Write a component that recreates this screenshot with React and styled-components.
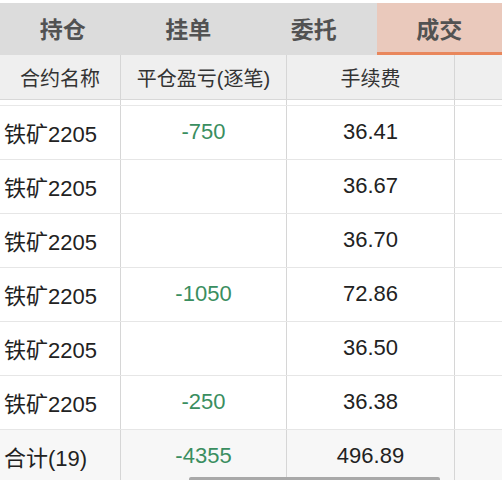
import React from "react"
import styled, { createGlobalStyle } from "styled-components"

const GlobalStyle = createGlobalStyle`
  html, body {
    margin: 0;
    padding: 0;
    background: #ffffff;
    font-family: "Liberation Sans", "Noto Sans CJK SC", sans-serif;
  }
`

const Page = styled.div`
  position: relative;
  width: 502px;
  height: 480px;
  overflow: hidden;
  padding-top: 3px;
  box-sizing: border-box;
  background: #ffffff;
`

const TabBar = styled.nav`
  display: flex;
  height: 49px;
  background: #dcdcdc;
  border-bottom: 3px solid #dcdcdc;
`

const Tab = styled.div`
  flex: 1;
  display: flex;
  align-items: center;
  justify-content: center;
  font-size: 23px;
  font-weight: bold;
  color: #525252;
  background: ${(p) => (p.active ? "#eac9bc" : "transparent")};
  margin-bottom: -3px;
  border-bottom: 3px solid ${(p) => (p.active ? "#e9875c" : "transparent")};
`

const Row = styled.div`
  display: grid;
  grid-template-columns: 121px 166px 168px 1fr;
  height: ${(p) => p.height || 54}px;
  box-sizing: border-box;
  background: ${(p) => p.bg || "#ffffff"};
  border-bottom: 1px solid ${(p) => p.line || "#e6e6e6"};
`

const Cell = styled.div`
  display: flex;
  align-items: center;
  justify-content: ${(p) => (p.left ? "flex-start" : "center")};
  padding-left: ${(p) => (p.left ? "4px" : "0")};
  padding-bottom: ${(p) => (p.size ? 0 : 1)}px;
  border-right: 1px solid #d6d6d6;
  font-size: ${(p) => p.size || 22}px;
  color: ${(p) => (p.green ? "#3a8e60" : p.muted ? "#333333" : "#222222")};
  white-space: nowrap;
  &:last-child {
    border-right: none;
  }
`

const ScrollThumb = styled.div`
  position: absolute;
  left: 189px;
  bottom: 0;
  width: 251px;
  height: 3px;
  background: #a9a9a9;
  border-radius: 2px 2px 0 0;
`

const tabs = ["持仓", "挂单", "委托", "成交"]

const trades = [
  { name: "铁矿2205", pnl: "-750", fee: "36.41" },
  { name: "铁矿2205", pnl: "", fee: "36.67" },
  { name: "铁矿2205", pnl: "", fee: "36.70" },
  { name: "铁矿2205", pnl: "-1050", fee: "72.86" },
  { name: "铁矿2205", pnl: "", fee: "36.50" },
  { name: "铁矿2205", pnl: "-250", fee: "36.38" },
]

const App = () => {
  return (
    <Page>
      <GlobalStyle />
      <TabBar>
        {tabs.map((t, i) => (
          <Tab key={t} active={i === 3}>{t}</Tab>
        ))}
      </TabBar>
      <Row height={45} bg="#efefef" line="#d8d8d8">
        <Cell size={20} muted>合约名称</Cell>
        <Cell size={20} muted>平仓盈亏(逐笔)</Cell>
        <Cell size={20} muted>手续费</Cell>
        <Cell size={20} />
      </Row>
      <Row height={6} line="#e8e8e8">
        <Cell size={1} />
        <Cell size={1} />
        <Cell size={1} />
        <Cell size={1} />
      </Row>
      {trades.map((r, i) => (
        <Row key={i}>
          <Cell left>{r.name}</Cell>
          <Cell green>{r.pnl}</Cell>
          <Cell>{r.fee}</Cell>
          <Cell />
        </Row>
      ))}
      <Row bg="#f7f7f7">
        <Cell left>合计(19)</Cell>
        <Cell green>-4355</Cell>
        <Cell>496.89</Cell>
        <Cell />
      </Row>
      <ScrollThumb />
    </Page>
  )
}

export default App
